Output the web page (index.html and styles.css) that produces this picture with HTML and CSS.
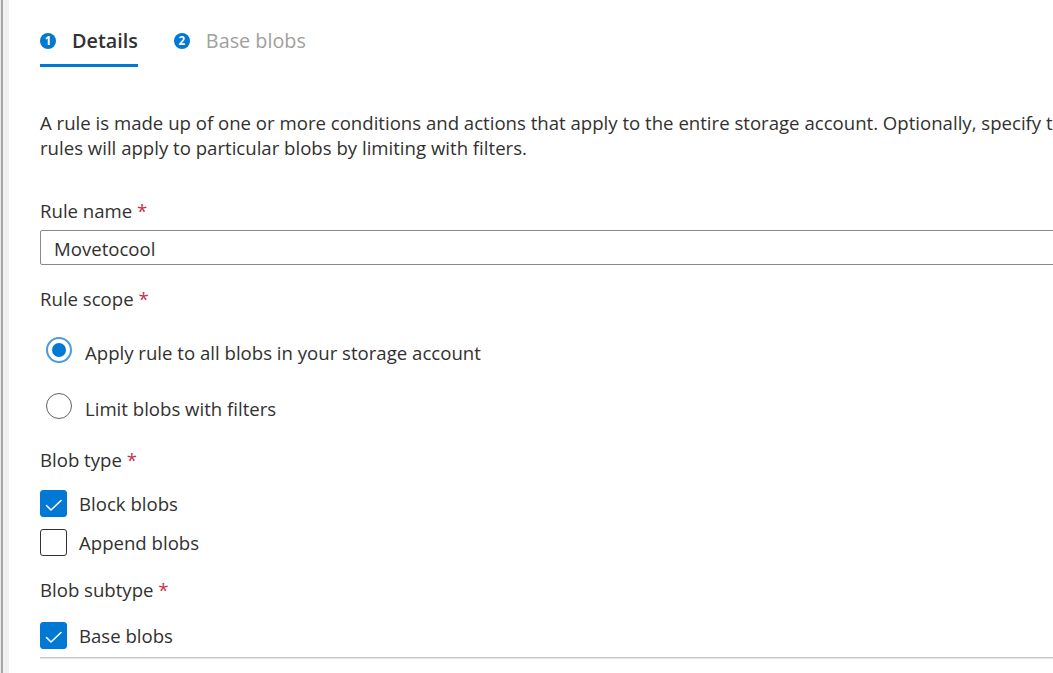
FILE: index.html
```html
<!DOCTYPE html>
<html lang="en">
<head>
<meta charset="utf-8">
<title>Add a rule</title>
<link rel="stylesheet" href="styles.css">
</head>
<body>
<div class="page">
  <div class="edge"></div>
  <main class="content">
    <nav class="tabs">
      <div class="tab active"><span class="step">1</span><span class="tab-label">Details</span></div>
      <div class="tab"><span class="step">2</span><span class="tab-label">Base blobs</span></div>
    </nav>

    <p class="desc">A rule is made up of one or more conditions and actions that apply to the entire storage account. Optionally, specify that<br>rules will apply to particular blobs by limiting with filters.</p>

    <div class="field f-name">
      <label class="label">Rule name <span class="req">*</span></label>
      <div class="input">Movetocool</div>
    </div>

    <div class="field f-scope">
      <div class="label">Rule scope <span class="req">*</span></div>
      <div class="radios">
        <div class="radio-row"><span class="radio checked"></span><span>Apply rule to all blobs in your storage account</span></div>
        <div class="radio-row"><span class="radio"></span><span>Limit blobs with filters</span></div>
      </div>
    </div>

    <div class="field f-type">
      <div class="label">Blob type <span class="req">*</span></div>
      <div class="checks">
        <div class="check-row"><span class="check checked"><svg viewBox="0 0 27 27" width="27" height="27"><path d="M6.5 15.5L11 20L21 10.5" fill="none" stroke="#fff" stroke-width="1.6" stroke-linecap="round" stroke-linejoin="round"/></svg></span><span>Block blobs</span></div>
        <div class="check-row"><span class="check"></span><span>Append blobs</span></div>
      </div>
    </div>

    <div class="field f-subtype">
      <div class="label">Blob subtype <span class="req">*</span></div>
      <div class="checks">
        <div class="check-row"><span class="check checked"><svg viewBox="0 0 27 27" width="27" height="27"><path d="M6.5 15.5L11 20L21 10.5" fill="none" stroke="#fff" stroke-width="1.6" stroke-linecap="round" stroke-linejoin="round"/></svg></span><span>Base blobs</span></div>
      </div>
    </div>

    <div class="divider"></div>
  </main>
</div>
</body>
</html>
```

FILE: styles.css
```css
html, body {
  margin: 0;
  padding: 0;
  background: #ffffff;
  overflow: hidden;
}
body {
  font-family: "Open Sans", "Noto Sans", sans-serif;
  font-size: 18.6px;
  color: #323130;
}
.page {
  display: flex;
  height: 673px;
}
.edge {
  flex: 0 0 auto;
  width: 9px;
  background: linear-gradient(to right, #e8e8e8 0, #e8e8e8 1px, #a6a6a6 1px, #a6a6a6 3px, #f0f0f0 3px, #f0f0f0 9px);
}
.content {
  flex: 0 0 auto;
  width: 1300px;
  padding-left: 31px;
}
.tabs {
  display: flex;
  gap: 36px;
  padding-top: 29px;
}
.tab {
  display: flex;
  align-items: center;
  gap: 16px;
  height: 24px;
  padding-bottom: 11px;
  border-bottom: 3px solid transparent;
  color: #a19f9d;
  font-size: 19.8px;
  line-height: 24px;
}
.tab.active {
  border-bottom-color: #0078d4;
  color: #323130;
  font-weight: 600;
}
.step {
  width: 16px;
  height: 16px;
  border-radius: 50%;
  background: #0078d4;
  color: #fff;
  font-size: 11.5px;
  font-weight: 700;
  display: flex;
  align-items: center;
  justify-content: center;
  line-height: 1;
}
.desc {
  margin: 43px 0 0;
  line-height: 25px;
  white-space: nowrap;
}
.label {
  display: block;
  line-height: 24px;
}
.req {
  color: #c4314b;
}
.f-name { margin-top: 39px; }
.f-scope { margin-top: 22px; }
.f-type { margin-top: 29px; }
.f-subtype { margin-top: 22px; }
.input {
  margin-top: 7px;
  height: 35px;
  border: 1px solid #8a8886;
  border-radius: 2px;
  box-sizing: border-box;
  padding: 2px 13px 0;
  display: flex;
  align-items: center;
}
.radios {
  display: flex;
  flex-direction: column;
  gap: 30px;
  padding: 26px 0 0 6px;
}
.radio-row, .check-row {
  display: flex;
  align-items: center;
}
.radio-row {
  gap: 13px;
  height: 26px;
}
.radio-row > span:last-child {
  padding-top: 5px;
}
.radio {
  width: 26px;
  height: 26px;
  box-sizing: border-box;
  border-radius: 50%;
  border: 1.5px solid #616161;
  display: flex;
  align-items: center;
  justify-content: center;
}
.radio.checked {
  border: 2px solid #4c9be0;
}
.radio.checked::after {
  content: "";
  width: 14px;
  height: 14px;
  border-radius: 50%;
  background: #0078d4;
}
.checks {
  display: flex;
  flex-direction: column;
  gap: 12px;
}
.f-type .checks { padding-top: 18px; }
.f-subtype .checks { padding-top: 20px; }
.check-row {
  gap: 12px;
  height: 27px;
}
.check {
  width: 27px;
  height: 27px;
  box-sizing: border-box;
  border-radius: 3px;
  border: 1.5px solid #323130;
  display: flex;
  align-items: center;
  justify-content: center;
}
.check svg {
  display: block;
  flex: 0 0 auto;
}
.check.checked {
  background: #0078d4;
  border-color: #0078d4;
}
.divider {
  margin-top: 8px;
  height: 1px;
  background: #c8c6c4;
  border-bottom: 1px solid #e6e6e6;
}
```
